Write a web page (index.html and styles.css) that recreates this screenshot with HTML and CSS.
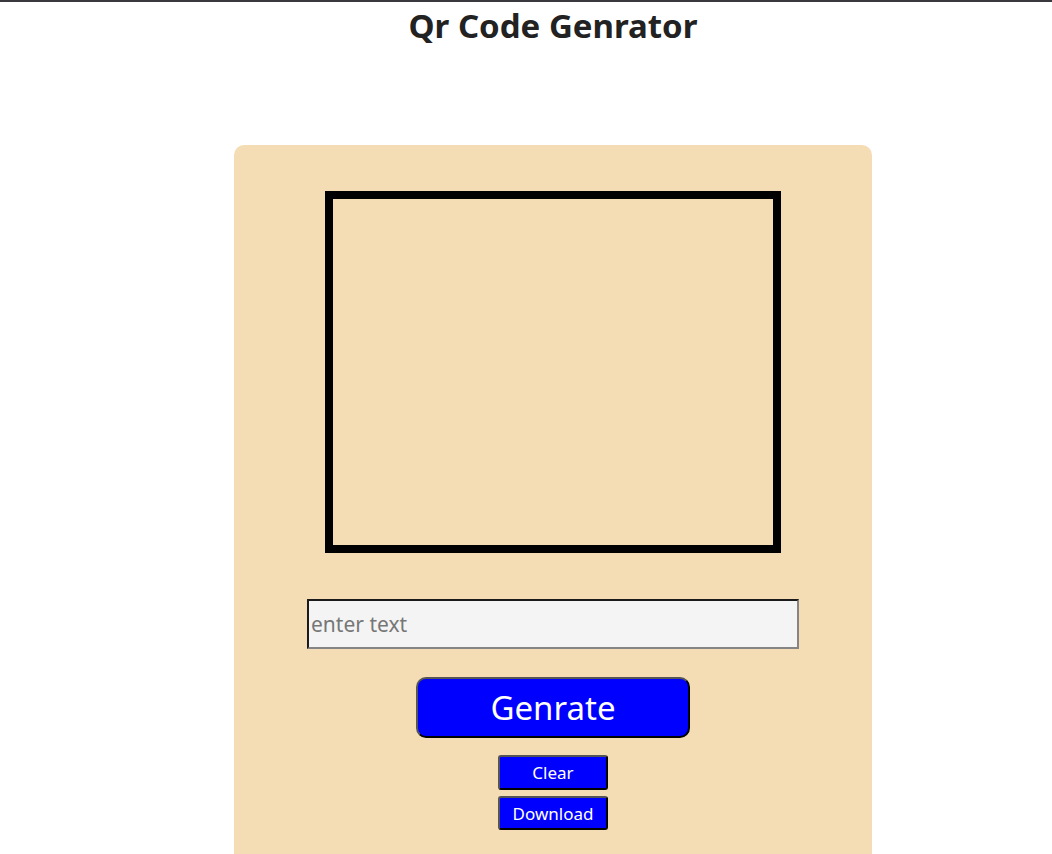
FILE: index.html
```html
<!DOCTYPE html>
<html>
<head>
<meta charset="utf-8">
<link rel="stylesheet" href="styles.css">
</head>
<body>
<h1 class="title">Qr Code Genrator</h1>
<div class="card">
  <div class="qr-box"></div>
  <input class="text-input" type="text" placeholder="enter text">
  <button class="btn-generate">Genrate</button>
  <button class="btn-small btn-clear">Clear</button>
  <button class="btn-small btn-download">Download</button>
</div>
</body>
</html>
```
FILE: styles.css
```css
html, body {
  margin: 0;
  padding: 0;
  background: #fff;
}
body {
  border-top: 2px solid #3a3a3e;
  padding-left: 54px;
  font-family: "Noto Sans", "Open Sans", sans-serif;
  height: 852px;
  overflow: hidden;
}
.title {
  margin: 4px 0 0 0;
  text-align: center;
  font-size: 33px;
  font-weight: 700;
  color: #222;
  line-height: 40px;
  height: 139px;
}
.card {
  width: 638px;
  margin: 0 auto;
  background: #f4ddb4;
  border-radius: 10px 10px 0 0;
  height: 760px;
  padding-top: 46px;
  box-sizing: border-box;
  display: flex;
  flex-direction: column;
  align-items: center;
}
.qr-box {
  width: 440px;
  height: 346px;
  border: 8px solid #000;
  flex: none;
}
.text-input {
  margin-top: 46px;
  width: 492px;
  height: 50px;
  box-sizing: border-box;
  border: 2px solid #767676;
  border-top-color: #1a1a1a;
  border-left-color: #1a1a1a;
  border-bottom-color: #858585;
  border-right-color: #858585;
  background: #f4f4f4;
  font-family: "Noto Sans", "Open Sans", sans-serif;
  font-size: 21px;
  padding: 0 2px;
  outline: none;
}
.text-input::placeholder {
  color: #777;
}
.btn-generate {
  margin-top: 28px;
  width: 274px;
  height: 61px;
  box-sizing: border-box;
  background: #0000ff;
  color: #fff;
  border: 2px solid #000;
  border-top-color: #555;
  border-left-color: #555;
  border-radius: 10px;
  font-family: "Noto Sans", "Open Sans", sans-serif;
  font-size: 33px;
  padding: 0;
  line-height: 1;
}
.btn-small {
  width: 110px;
  height: 35px;
  box-sizing: border-box;
  background: #0000ff;
  color: #fff;
  border: 2px solid #000;
  border-top-color: #555;
  border-left-color: #555;
  border-radius: 3px;
  font-family: "Noto Sans", "Open Sans", sans-serif;
  font-size: 17px;
  padding: 0;
}
.btn-clear {
  margin-top: 17px;
}
.btn-download {
  margin-top: 6px;
  height: 34px;
}
```
